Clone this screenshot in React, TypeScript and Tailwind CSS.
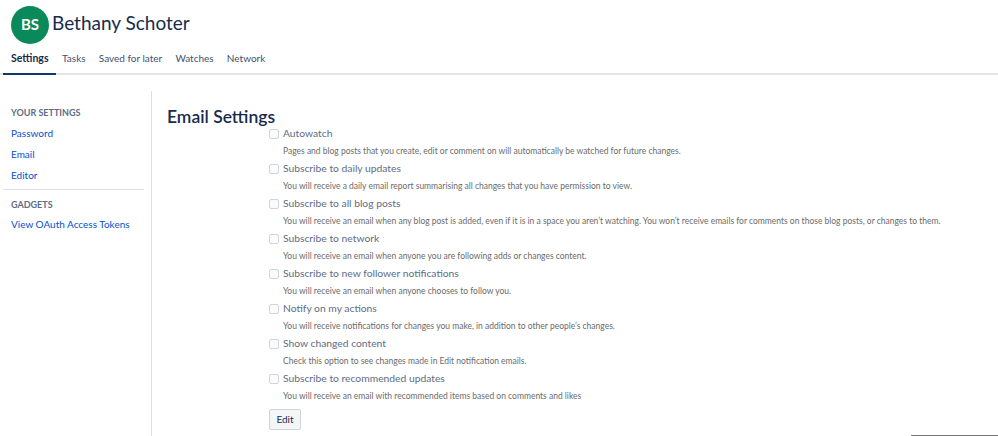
const options = [
  {
    label: "Autowatch",
    desc: "Pages and blog posts that you create, edit or comment on will automatically be watched for future changes.",
  },
  {
    label: "Subscribe to daily updates",
    desc: "You will receive a daily email report summarising all changes that you have permission to view.",
  },
  {
    label: "Subscribe to all blog posts",
    desc: "You will receive an email when any blog post is added, even if it is in a space you aren’t watching. You won’t receive emails for comments on those blog posts, or changes to them.",
  },
  {
    label: "Subscribe to network",
    desc: "You will receive an email when anyone you are following adds or changes content.",
  },
  {
    label: "Subscribe to new follower notifications",
    desc: "You will receive an email when anyone chooses to follow you.",
  },
  {
    label: "Notify on my actions",
    desc: "You will receive notifications for changes you make, in addition to other people’s changes.",
  },
  {
    label: "Show changed content",
    desc: "Check this option to see changes made in Edit notification emails.",
  },
  {
    label: "Subscribe to recommended updates",
    desc: "You will receive an email with recommended items based on comments and likes",
  },
];

const tabs = ["Settings", "Tasks", "Saved for later", "Watches", "Network"];

export default function App() {
  return (
    <div className="w-[998px] h-[436px] overflow-hidden bg-white relative font-['Segoe_UI','Lato',sans-serif] text-[#172b4d]">
      {/* Header */}
      <div className="flex items-center pl-[11px] pt-[5px] h-[44px]">
        <div className="w-[38px] h-[38px] rounded-full bg-[#0a8a5a] flex items-center justify-center text-white text-[15px] font-bold">
          BS
        </div>
        <div className="ml-[3px] text-[19px] leading-none text-[#172b4d] -mt-[4px]">Bethany Schoter</div>
      </div>

      {/* Tabs */}
      <div className="flex pl-[3px] mt-[6px] border-b-2 border-[#e4e5e7] h-[25px]">
        {tabs.map((t, i) => (
          <div
            key={t}
            className={
              i === 0
                ? "pl-[8px] pr-[7px] text-[10.5px] font-bold text-[#172b4d] border-b-2 border-[#0b3a6e] -mb-[2px] leading-[16px]"
                : "px-[6.6px] text-[10px] text-[#42526e] leading-[16px]"
            }
          >
            {t}
          </div>
        ))}
      </div>

      {/* Body */}
      <div className="flex mt-[16px]">
        <div className="w-[152px] border-r border-[#dcdfe4] h-[345px] pr-[7px] pt-[16px]">
          <div className="pl-[11px] text-[9px] font-bold text-[#5e6c84] leading-[12px]">YOUR SETTINGS</div>
          <div className="pl-[11px] mt-[4px] flex flex-col text-[10px] text-[#0052cc] leading-[21px]">
            <span>Password</span>
            <span>Email</span>
            <span>Editor</span>
          </div>
          <div className="ml-[3px] mt-[3px] border-t border-[#dcdfe4]" />
          <div className="pl-[11px] mt-[9px] text-[9px] font-bold text-[#5e6c84] leading-[12px]">GADGETS</div>
          <div className="pl-[11px] mt-[7px] text-[10px] text-[#0052cc] leading-[12px]">View OAuth Access Tokens</div>
        </div>

        <div className="pl-[15px] pt-[15px] flex-1">
          <div className="text-[17.5px] font-semibold leading-[22px] text-[#172b4d]">Email Settings</div>
          <div className="pl-[102px] -mt-[3px]">
            {options.map((o) => (
              <div key={o.label} className="h-[35px]">
                <div className="flex items-center h-[18px]">
                  <span className="w-[10px] h-[10px] border border-[#d2d4d8] rounded-[2px] bg-[#fafbfc]" />
                  <span className="ml-[4px] text-[10.3px] text-[#5e6c84]">{o.label}</span>
                </div>
                <div className="pl-[14px] h-[17px] flex items-center text-[8.5px] text-[#6b6b6b] whitespace-nowrap">
                  {o.desc}
                </div>
              </div>
            ))}
            <button className="mt-[1px] w-[32px] h-[21px] border border-[#cfd2d6] rounded-[2px] bg-[#f4f5f7] text-[10px] text-[#172b4d]">
              Edit
            </button>
          </div>
        </div>
      </div>

      <div className="absolute right-0 bottom-0 w-[87px] border-t border-[#777]" />
    </div>
  );
}
